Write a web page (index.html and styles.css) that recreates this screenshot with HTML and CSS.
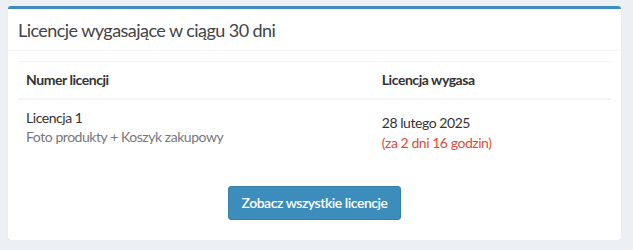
FILE: index.html
```html
<!DOCTYPE html>
<html lang="pl">
<head>
  <meta charset="UTF-8">
  <title>Licencje</title>
  <link rel="stylesheet" href="styles.css">
</head>
<body>
  <div class="box">
    <div class="box-header">
      <h3 class="box-title">Licencje wygasające w ciągu 30 dni</h3>
    </div>
    <div class="box-body">
      <table class="table">
        <thead>
          <tr>
            <th class="col-name">Numer licencji</th>
            <th>Licencja wygasa</th>
          </tr>
        </thead>
        <tbody>
          <tr>
            <td>
              Licencja 1<br>
              <span class="muted">Foto produkty + Koszyk zakupowy</span>
            </td>
            <td class="expires">
              28 lutego 2025<br>
              <span class="danger">(za 2 dni 16 godzin)</span>
            </td>
          </tr>
        </tbody>
      </table>
      <div class="actions">
        <button type="button" class="btn">Zobacz wszystkie licencje</button>
      </div>
    </div>
  </div>
</body>
</html>
```
FILE: styles.css
```css
body {
  margin: 0;
  padding: 6px 12px 0 8px;
  background: #ecf0f5;
  font-family: Lato, "Open Sans", sans-serif;
  font-size: 14px;
  letter-spacing: -0.45px;
  color: #333;
}
.box {
  background: #fff;
  border-top: 3px solid #3c8dbc;
  border-radius: 3px;
  box-shadow: 0 1px 1px rgba(0,0,0,0.1);
}
.box-header {
  padding: 12px 10px 11px;
  border-bottom: 1px solid #f4f4f4;
}
.box-title {
  margin: 0;
  font-size: 18px;
  font-weight: normal;
  line-height: 18px;
  letter-spacing: -0.55px;
  color: #444;
}
.box-body {
  padding: 10px;
}
.table {
  width: 100%;
  border-collapse: collapse;
  margin-bottom: 25px;
}
.table th,
.table td {
  text-align: left;
  padding: 8px;
  line-height: 20px;
  vertical-align: top;
  border-top: 1px solid #f4f4f4;
}
.table th {
  font-weight: bold;
  border-bottom: 2px solid #f4f4f4;
}
.col-name {
  width: 60%;
}
.table td {
  line-height: 19px;
}
.table td.expires {
  padding-top: 13px;
  line-height: 20px;
}
.muted {
  color: #777;
}
.danger {
  color: #dd4b39;
}
.actions {
  text-align: center;
  padding-bottom: 10px;
}
.btn {
  font-family: inherit;
  font-size: 14px;
  font-weight: 600;
  letter-spacing: -0.45px;
  color: #fff;
  background: #3c8dbc;
  border: 1px solid #367fa9;
  border-radius: 3px;
  padding: 6px 12px;
  line-height: 20px;
  cursor: pointer;
}
```
